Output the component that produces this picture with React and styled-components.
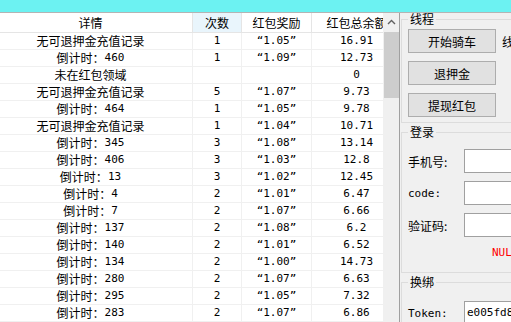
import React from "react";
import styled, { createGlobalStyle } from "styled-components";

const CJK = `"Noto Sans CJK SC", "Noto Sans", sans-serif`;
const MONO = `"DejaVu Sans Mono", "Noto Sans CJK SC", monospace`;

const Global = createGlobalStyle`
  *, *::before, *::after { box-sizing: border-box; }
  html, body { margin: 0; padding: 0; background: #f0f0f0; }
  body { font-family: ${CJK}; font-size: 12px; color: #000; overflow: hidden; }
`;

const Window = styled.div`
  width: 511px;
  height: 322px;
  overflow: hidden;
  display: flex;
  flex-direction: column;
`;

const TitleStrip = styled.div`
  height: 13px;
  flex: none;
  background: #6cf2f2;
  border-bottom: 1px solid #b4b4b4;
`;

const Main = styled.div`
  flex: 1;
  display: flex;
  min-height: 0;
`;

const GridPane = styled.div`
  width: 400px;
  flex: none;
  display: flex;
  background: #fff;
  border-right: 1px solid #a0a0a0;
  overflow: hidden;
`;

const Table = styled.div`
  width: 383px;
  flex: none;
  overflow: hidden;
`;

const Row = styled.div`
  display: grid;
  grid-template-columns: 193px 49px 70px 90px;
  width: 402px;
  height: ${(p) => (p.$header ? 20 : 17)}px;
`;

const Cell = styled.div`
  display: flex;
  align-items: center;
  justify-content: center;
  white-space: nowrap;
  padding-right: ${(p) => p.$pad || 0}px;
  border-right: 1px solid #f0f0f0;
  border-bottom: 1px solid #f0f0f0;
  font-family: ${(p) => (p.$mono ? MONO : CJK)};
  font-size: ${(p) => (p.$mono ? 11 : 12)}px;
  line-height: 16px;
`;

const HeadCell = styled.div`
  display: flex;
  align-items: center;
  justify-content: center;
  white-space: nowrap;
  padding-right: ${(p) => p.$pad || 0}px;
  background: ${(p) => (p.$hot ? "#e9f5fc" : "#fff")};
  border-right: 1px solid #e5e5e5;
  border-bottom: 1px solid #e5e5e5;
  font-size: 12px;
`;

const Num = styled.span`
  font-family: ${MONO};
  font-size: 11px;
`;

const VScroll = styled.div`
  width: 16px;
  flex: none;
  background: #f0f0f0;
  display: flex;
  flex-direction: column;
  align-items: center;
`;

const ArrowBox = styled.div`
  height: 18px;
  width: 100%;
  display: flex;
  align-items: center;
  justify-content: center;
`;

const Thumb = styled.div`
  width: 15px;
  height: 66px;
  margin-top: 1px;
  background: #cdcdcd;
`;

const Side = styled.div`
  flex: 1;
  min-width: 0;
  overflow: hidden;
  padding-left: 1px;
  background: #f0f0f0;
`;

const Group = styled.fieldset`
  margin: ${(p) => p.$mt || 0}px 0 0 0;
  width: 240px;
  min-width: 0;
  border: 1px solid #dcdcdc;
  padding: ${(p) => p.$pt}px 0 ${(p) => p.$pb}px 6px;
  display: flex;
  flex-direction: column;
  gap: 8px;
`;

const Legend = styled.legend`
  padding: 0 2px;
  margin: 0;
  font-size: 12px;
  line-height: 12px;
`;

const ButtonRow = styled.div`
  display: flex;
  align-items: center;
  gap: 6px;
`;

const WinButton = styled.button`
  width: 88px;
  height: 24px;
  flex: none;
  padding: 0;
  margin: 0;
  background: #e1e1e1;
  border: 1px solid #adadad;
  font-family: ${CJK};
  font-size: 12px;
  color: #000;
`;

const Status = styled.span`
  white-space: nowrap;
  font-size: 12px;
`;

const FieldRow = styled.div`
  display: flex;
  align-items: center;
  height: 24px;
`;

const FieldLabel = styled.span`
  width: 56px;
  flex: none;
  font-family: ${(p) => (p.$mono ? MONO : CJK)};
  font-size: ${(p) => (p.$mono ? 11 : 12)}px;
  white-space: nowrap;
`;

const TextBox = styled.div`
  width: 160px;
  height: 24px;
  flex: none;
  background: #fff;
  border: 1px solid #a0a0a0;
  padding-left: 2px;
  font-family: ${MONO};
  font-size: 11px;
  line-height: 22px;
  white-space: nowrap;
`;

const ErrorText = styled.div`
  margin-top: 2px;
  padding-left: 84px;
  color: #ff0000;
  font-family: ${MONO};
  font-size: 11px;
  line-height: 12px;
  white-space: nowrap;
`;

const rows = [
  ["无可退押金充值记录", "1", "“1.05”", "16.91"],
  ["倒计时：460", "1", "“1.09”", "12.73"],
  ["未在红包领域", "", "", "0"],
  ["无可退押金充值记录", "5", "“1.07”", "9.73"],
  ["倒计时：464", "1", "“1.05”", "9.78"],
  ["无可退押金充值记录", "1", "“1.04”", "10.71"],
  ["倒计时：345", "3", "“1.08”", "13.14"],
  ["倒计时：406", "3", "“1.03”", "12.8"],
  ["倒计时：13", "3", "“1.02”", "12.45"],
  ["倒计时：4", "2", "“1.01”", "6.47"],
  ["倒计时：7", "2", "“1.07”", "6.66"],
  ["倒计时：137", "2", "“1.08”", "6.2"],
  ["倒计时：140", "2", "“1.01”", "6.52"],
  ["倒计时：134", "2", "“1.00”", "14.73"],
  ["倒计时：280", "2", "“1.07”", "6.63"],
  ["倒计时：295", "2", "“1.05”", "7.32"],
  ["倒计时：283", "2", "“1.07”", "6.86"],
];

function Detail({ text }) {
  const m = text.match(/^(.*：)(\d+)$/);
  if (!m) return text;
  return (
    <>
      {m[1]}
      <Num>{m[2]}</Num>
    </>
  );
}

export default function App() {
  return (
    <>
      <Global />
      <Window>
        <TitleStrip />
        <Main>
          <GridPane>
            <Table>
              <Row $header>
                <HeadCell $pad={11}>详情</HeadCell>
                <HeadCell $hot>次数</HeadCell>
                <HeadCell>红包奖励</HeadCell>
                <HeadCell>红包总余额</HeadCell>
              </Row>
              {rows.map((r, i) => (
                <Row key={i}>
                  <Cell $pad={11}>
                    <Detail text={r[0]} />
                  </Cell>
                  <Cell $mono>{r[1]}</Cell>
                  <Cell $mono>{r[2]}</Cell>
                  <Cell $mono>{r[3]}</Cell>
                </Row>
              ))}
            </Table>
            <VScroll>
              <ArrowBox>
                <svg width="9" height="6" viewBox="0 0 9 6">
                  <polyline
                    points="1,5 4.5,1.5 8,5"
                    fill="none"
                    stroke="#606060"
                    strokeWidth="1.4"
                  />
                </svg>
              </ArrowBox>
              <Thumb />
            </VScroll>
          </GridPane>
          <Side>
            <Group $pt={4} $pb={5}>
              <Legend>线程</Legend>
              <ButtonRow>
                <WinButton>开始骑车</WinButton>
                <Status>线程状态</Status>
              </ButtonRow>
              <ButtonRow>
                <WinButton>退押金</WinButton>
              </ButtonRow>
              <ButtonRow>
                <WinButton>提现红包</WinButton>
              </ButtonRow>
            </Group>
            <Group $mt={3} $pt={11} $pb={13}>
              <Legend>登录</Legend>
              <FieldRow>
                <FieldLabel>手机号:</FieldLabel>
                <TextBox />
              </FieldRow>
              <FieldRow>
                <FieldLabel $mono>code:</FieldLabel>
                <TextBox />
              </FieldRow>
              <FieldRow>
                <FieldLabel>验证码:</FieldLabel>
                <TextBox />
              </FieldRow>
              <ErrorText>NULL</ErrorText>
            </Group>
            <Group $mt={3} $pt={13} $pb={6}>
              <Legend>换绑</Legend>
              <FieldRow>
                <FieldLabel $mono>Token:</FieldLabel>
                <TextBox>e005fd80a1c2</TextBox>
              </FieldRow>
            </Group>
          </Side>
        </Main>
      </Window>
    </>
  );
}
